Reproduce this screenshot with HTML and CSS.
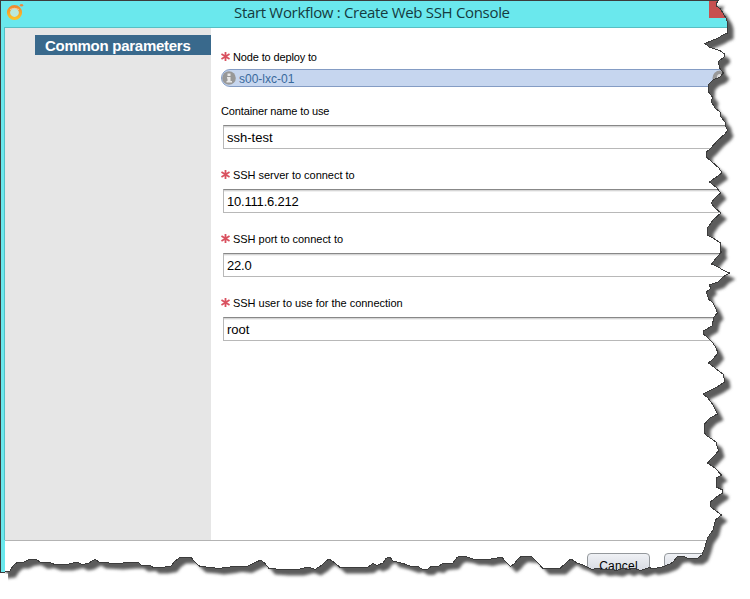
FILE: index.html
```
<!DOCTYPE html>
<html lang="en">
<head>
<meta charset="utf-8">
<title>Start Workflow : Create Web SSH Console</title>
<link rel="stylesheet" href="styles.css">
</head>
<body>
<svg class="layer" width="750" height="599" viewBox="0 0 750 599">
  <defs>
    <path id="edge" d="M.5 .5H718.5L716.5 3V6L720.5 9L723.5 14L726 18L727.5 23V33L723 35L718 38L711 41L705 43.5L709 47L715 49L720 50.5L724 53.500V57L718.500 61.500L719.500 68L723.500 73L720 77L713 80L709 84L708.500 92L712.500 97L711.500 102L715 108L720 112L721 117L725 122L726 127L727.500 130L725 134L718 140L710 149L706.500 152V157L712 162L719 168L722 173L715 178L709.500 182L717 188L720.500 193L715 198L711 203L715 208L721 213L713 220L707.500 228V235L713 238L720.500 243L720 250L721.500 252L717 257L711.500 264L718 267L723 270L729.500 273L723 277L718 282L709 285L711 288L706.500 292L708.500 299L713 303L715.500 308L717.500 313L714 317L712 326L703.500 331V334L708 338L713 343L716 348L718 353L713 359L708.500 363L715 368L723.500 374.500L724.500 382L717 387L703 394L708 398L713 405L717.500 414L710 418L704.500 424V433L707 436L712 439L716 442L718.500 451L713 457L707.500 463L715 468L721.500 475L716.500 478V487L722.500 490V493L715 498L710.500 502L711 507L721.500 515L715.500 520L713 530L707.500 538L705 547L702 555L697 558.500H688L683 556L677 557L673 562L670 564L662 567L657 568L651.500 569L650 567.500L640 570.500L633 568L628 570L623 568L617 570.500L610 569.500L603 570L598 568L592 569.500L583 565L577 563L571 559L567 562L560 568.500H549L543 568.500L538 563L532 557L522 556L518 559L515 563L510.500 566.500L505 561L502 557.500L493 558.500L487 560L480 559L473 559L467 557L460 556L457 557.500L453 563L442 564L438 567L432 566L428 569H422L417 566L413 567L403 563.500L397 562L393 561L390 557L386 558.500L383 563L377 565.500L373 563.500L368 567L360 567.500H350L340 567.500L335 563L329 559L325 562L322 565L315 569.500L308 567L298 569.500H283L269 568.500L265 563.500L261 560L256 562L250 565L246 567L237 566H235L230 567L218 568.500L211 567.500L200 566.500L196 563L191 557.500H180L175 561L171 566L162 567.500H153L150 565L142 565.500L138 562.500H130L117 563.500L109 563L100 562.500L95 559.500L88 563.500L82 564.500L77 562L67 564.500L55 564.500L48 562L42 563L35 559L28 560L23 562.500H17L13 566L9.500 571.500L.5 572.500Z"/>
    <clipPath id="torn"><use href="#edge"/></clipPath>
    <filter id="soft" x="-5%" y="-5%" width="110%" height="110%"><feGaussianBlur stdDeviation="1.8"/></filter>
  </defs>
  <use href="#edge" class="shadow" filter="url(#soft)"/>
  <path class="corner" d="M0 573.500H8V590H0z"/>
</svg>

<div class="window">
  <header class="titlebar">
    <svg class="logo" width="20" height="20" viewBox="0 0 20 20">
      <defs><linearGradient id="orange" x2="0" y2="1"><stop stop-color="#f08a32"/><stop offset="1" stop-color="#fcc226"/></linearGradient></defs>
      <circle cx="8.500" cy="10.500" r="6" fill="#b9e9dc" stroke="url(#orange)" stroke-width="3.200"/>
      <path d="M4 7.500Q8 5 13 7.500" fill="none" stroke="#f9c69b"/>
      <ellipse cx="15.500" cy="3.300" rx="1.700" ry="1.300" fill="#ed8a42"/>
    </svg>
    <h1>Start Workflow : Create Web SSH Console</h1>
    <span class="close"></span>
  </header>
  <div class="content">
    <nav class="sidebar"><div class="step">Common parameters</div></nav>
    <main class="form">
      <div class="field">
        <div class="label"><svg class="star" viewBox="0 0 8 8"><path d="M4 0V8M.4 1.800L7.600 6.200M7.600 1.800L.4 6.200"/></svg><span class="tight">Node to deploy to</span></div>
        <div class="picker"><svg class="info" viewBox="0 0 14 14"><circle cx="7" cy="7" r="6.800"/><path d="M5.500 2.500h3v2.500h-3zM5 6h3.500v4H10v1.500H4.500V10h1V7.500H5z"/></svg><span>s00-lxc-01</span><svg class="search" viewBox="0 0 16 16"><circle cx="8" cy="8" r="7.500"/><circle cx="8" cy="7" r="3"/></svg></div>
      </div>
      <div class="field">
        <div class="label"><span class="tight">Container name to use</span></div>
        <div class="input">ssh-test</div>
      </div>
      <div class="field">
        <div class="label"><svg class="star" viewBox="0 0 8 8"><path d="M4 0V8M.4 1.800L7.600 6.200M7.600 1.800L.4 6.200"/></svg><span>SSH server to connect to</span></div>
        <div class="input address">10.111.6.212</div>
      </div>
      <div class="field">
        <div class="label"><svg class="star" viewBox="0 0 8 8"><path d="M4 0V8M.4 1.800L7.600 6.200M7.600 1.800L.4 6.200"/></svg><span>SSH port to connect to</span></div>
        <div class="input address">22.0</div>
      </div>
      <div class="field">
        <div class="label"><svg class="star" viewBox="0 0 8 8"><path d="M4 0V8M.4 1.800L7.600 6.200M7.600 1.800L.4 6.200"/></svg><span>SSH user to use for the connection</span></div>
        <div class="input">root</div>
      </div>
    </main>
  </div>
  <footer class="actions"><div class="button">Cancel</div><div class="button"></div></footer>
</div>

<svg class="layer" width="750" height="599" viewBox="0 0 750 599"><use href="#edge" class="outline"/></svg>
</body>
</html>
```
FILE: styles.css
```
* { box-sizing: border-box; }
body {
  margin: 0;
  width: 750px;
  height: 599px;
  position: relative;
  overflow: hidden;
  background: #fff;
  color: #000;
  font-family: "Liberation Sans", Arial, sans-serif;
}
.layer { position: absolute; top: 0; left: 0; pointer-events: none; }
.shadow { fill: #5c5c5c; transform: translate(6px, 6px); }
.corner { fill: #fff; }
.outline { fill: none; stroke: #3c3c3c; stroke-width: 1; shape-rendering: crispEdges; }

.window {
  position: relative;
  width: 750px;
  height: 599px;
  display: flex;
  flex-direction: column;
  padding-left: 4px;
  background: #6ae8ed;
  clip-path: url(#torn);
}
.titlebar {
  height: 27px;
  flex: none;
  display: flex;
  align-items: flex-start;
  position: relative;
}
.logo { margin: 2px 0 0 2px; }
h1 {
  margin: 2px 0 0 208px;
  font: 15px/20px "Open Sans", sans-serif;
  letter-spacing: -0.32px;
  color: #153b40;
  white-space: nowrap;
}
.close { position: absolute; right: 12px; top: 0; width: 29px; height: 18px; background: #c75050; }

.content {
  height: 513px;
  flex: none;
  display: flex;
  border-top: 1px solid #57bfc4;
  border-left: 1px solid #57bfc4;
  background: #fff;
}
.sidebar { width: 206px; background: #e6e6e6; padding: 7px 0 0 30px; }
.step {
  height: 20px;
  padding-left: 10px;
  background: #39698c;
  color: #fff;
  font-size: 15px;
  font-weight: bold;
  letter-spacing: -0.27px;
  line-height: 21px;
  white-space: nowrap;
}
.form { flex: 1; padding: 20px 0 0 10px; }
.field { height: 64px; }
.field:first-child { height: 54px; }
.label { height: 18px; display: flex; align-items: center; font-size: 11px; line-height: 18px; white-space: nowrap; }
.label span { letter-spacing: -0.03px; }
.label .tight { letter-spacing: -0.14px; }
.star { width: 9px; height: 9px; margin-right: 3px; margin-top: -1px; stroke: #d9515f; stroke-width: 1.600; }
.picker {
  height: 18px;
  width: 510px;
  margin-top: 3px;
  display: flex;
  align-items: center;
  padding: 0 2px 0 0;
  border: 1px solid #849cc4;
  border-radius: 9px;
  background: #c6d6ef;
  color: #39699c;
  font-size: 12px;
  line-height: 18px;
}
.picker span { padding-top: 1px; }
.info { width: 14px; height: 14px; margin-right: 3px; fill: #989898; }
.info path { fill: #e8e8e8; }
.search { width: 16px; height: 16px; margin-left: auto; fill: #999; }
.search circle + circle { fill: #ddd; }
.input {
  height: 24px;
  margin: 5px 0 0 2px;
  padding-left: 3px;
  border: 1px solid #b8b8b8;
  border-top-color: #888;
  box-shadow: inset 0 1px #d6d6d6, inset 0 2px #f0f0f0;
  font-size: 13px;
  line-height: 24px;
}
.address { letter-spacing: -0.2px; }
.actions {
  height: 60px;
  margin-left: 1px;
  display: flex;
  gap: 14px;
  padding: 12px 0 0 582px;
  background: #fff;
  border-top: 1px solid #b3b3b3;
}
.button {
  width: 63px;
  height: 25px;
  border: 1px solid #94989c;
  border-radius: 4px;
  background: linear-gradient(#eff1f5, #cdd1da);
  font-size: 12px;
  letter-spacing: 0.2px;
  line-height: 24px;
  text-align: center;
}
```
